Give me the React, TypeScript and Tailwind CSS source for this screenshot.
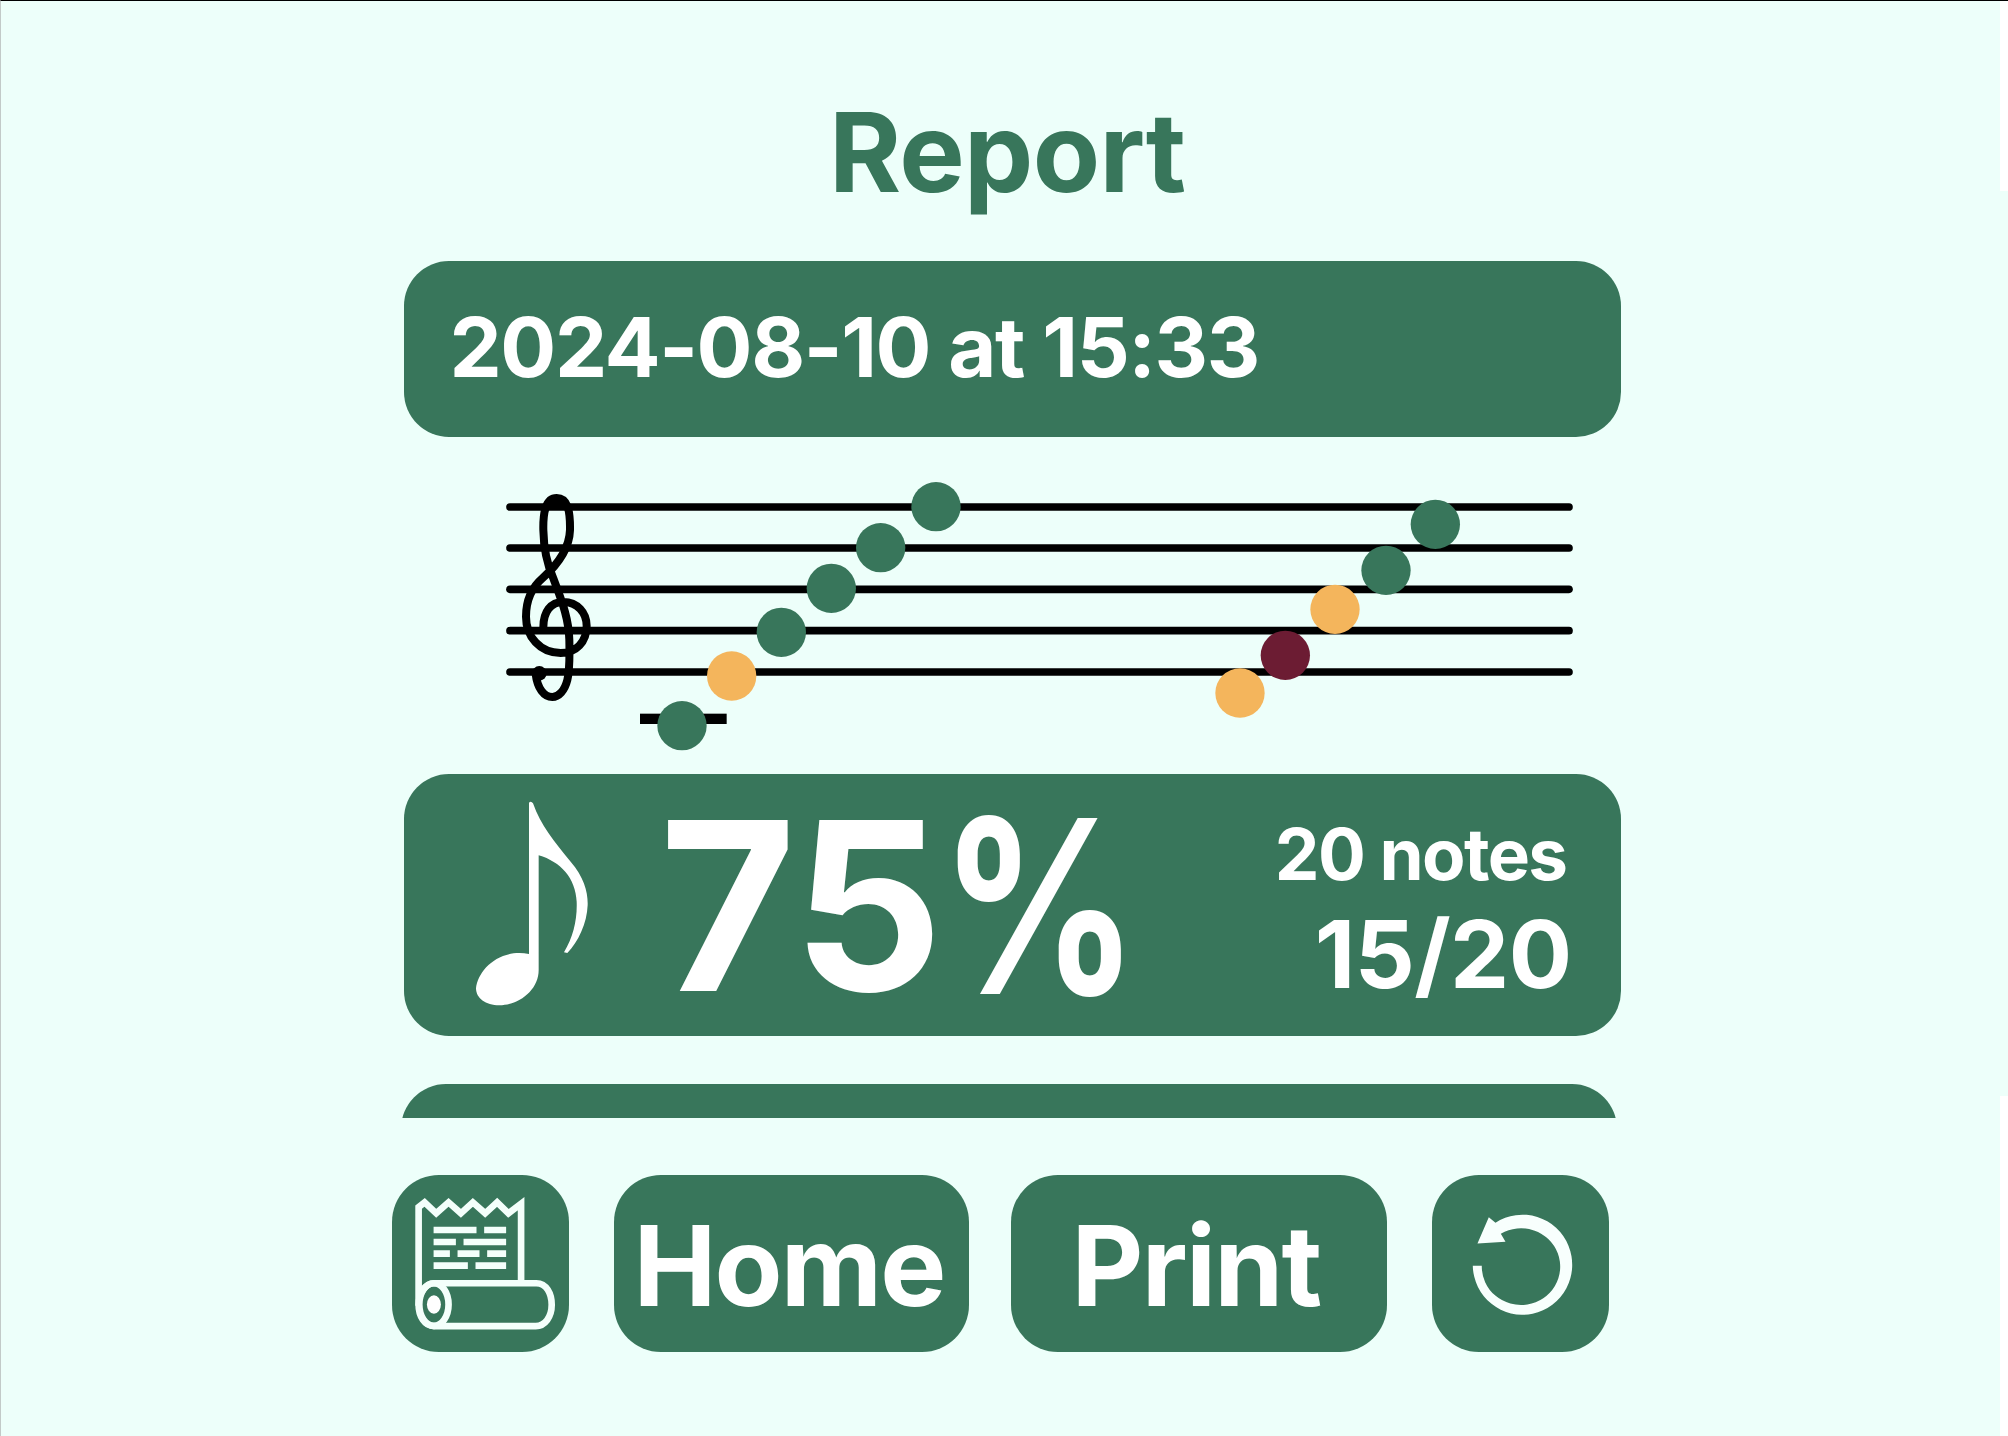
const STAFF_LINES = [111, 234, 358, 482, 606];

const GREEN = '#38765b';
const AMBER = '#f4b55c';
const MAROON = '#6c1c33';

const NOTES = [
  { x: 576, y: 767, color: GREEN },
  { x: 725, y: 618, color: AMBER },
  { x: 874, y: 487, color: GREEN },
  { x: 1024, y: 355, color: GREEN },
  { x: 1172, y: 233, color: GREEN },
  { x: 1338, y: 110, color: GREEN },
  { x: 2250, y: 669, color: AMBER },
  { x: 2386, y: 556, color: MAROON },
  { x: 2535, y: 418, color: AMBER },
  { x: 2688, y: 301, color: GREEN },
  { x: 2836, y: 163, color: GREEN },
];

function Staff() {
  return (
    <svg className="ml-[490px] mt-[33px] block h-[290px] w-[1110px] shrink-0" viewBox="0 0 3330 870">
      {STAFF_LINES.map((y) => (
        <line key={y} x1="60" x2="3237" y1={y} y2={y} stroke="#000" strokeWidth="23" strokeLinecap="round" />
      ))}
      <g fill="none" stroke="#000" strokeWidth="24" strokeLinecap="round" strokeLinejoin="round">
        <path
          strokeLinecap="butt"
          d="M160 472C160 425 182 396 220 396C262 396 290 428 290 468C290 516 258 549 212 549C150 549 108 500 108 440C108 385 130 348 158 324C194 292 238 240 240 180C241 120 232 84 200 84C166 84 159 130 160 180C161 235 172 285 190 325C212 385 236 440 238 510C239 560 240 600 232 630C224 662 206 681 187 681C162 681 142 655 137 612"
        />
        <path d="M180 97C190 89 210 89 220 97" />
      </g>
      <circle cx="148" cy="610" r="22" />
      <rect x="450" y="731" width="260" height="31" />
      {NOTES.map((n) => (
        <circle key={n.x} cx={n.x} cy={n.y} r="74" fill={n.color} />
      ))}
    </svg>
  );
}

function EighthNote() {
  return (
    <svg className="mb-[4px] block h-[206px] w-[116px] shrink-0" viewBox="250 120 348 618" fill="#fff">
      <path d="M415 128Q421 122 427 130C450 195 490 245 540 305C580 352 592 395 591 435C589 490 563 545 530 579L520 577C548 530 560 480 558 425C555 355 510 305 444 286V630C444 690 385 736 326 736C285 736 256 715 256 685C262 630 325 565 415 582Z" />
    </svg>
  );
}

function ReceiptIcon() {
  return (
    <svg className="block size-full" viewBox="36 342 532 533" fill="none" stroke="#f4fffb" strokeWidth="20">
      <path d="M116 735V438L134 424L169 457L206 424L243 457L279 424L316 457L352 424L386 457L424 428V665" />
      <path d="M162 667H470C500 667 516 698 516 732C516 768 496 796 468 796H162C134 796 116 766 116 732C116 698 136 667 162 667Z" />
      <ellipse cx="162" cy="731" rx="44" ry="64" />
      <ellipse cx="162" cy="731" rx="21" ry="28" fill="#fff" stroke="none" />
      <path d="M161 507H290M313 507H379M161 543H228M251 543H379M161 578H210M233 578H299M322 578H379M161 614H264M287 614H379" />
    </svg>
  );
}

function RestartIcon() {
  return (
    <svg className="block size-full" viewBox="66 72 530 532" fill="#f8fffd">
      <path d="M188 344A149 150 0 1 0 256 215L236 199L202 277L286 272L272 248A117.5 115 0 1 1 215 344Z" />
    </svg>
  );
}

export default function App() {
  return (
    <div className="relative h-[1436px] w-[2008px] overflow-hidden border-l border-t border-l-[#c2cac8] border-t-black bg-[#edfffa] font-['Inter',sans-serif] font-bold text-white">
      <div className="absolute right-0 top-0 h-[190px] w-[8px] bg-white" />
      <div className="absolute bottom-0 right-0 h-[340px] w-[8px] bg-white" />
      <div className="-ml-px -mt-px flex h-[1436px] w-[2008px] flex-col">
        <div className="flex h-[1118px] flex-col overflow-hidden">
          <h1 className="mt-[92px] h-[120px] shrink-0 whitespace-nowrap pl-[829px] text-[110px] leading-[120px] tracking-[-0.7px] text-[#38765b]">
            Report
          </h1>
          <div className="ml-[403.5px] mt-[48.5px] flex h-[176.5px] w-[1217px] shrink-0 items-center rounded-[45px] bg-[#38765b] pb-[3px] pl-[46px]">
            <span className="whitespace-nowrap text-[83px] leading-none tracking-[-1.42px]">2024-08-10 at 15:33</span>
          </div>
          <Staff />
          <div className="ml-[403.5px] mt-[14px] flex h-[262px] w-[1217px] shrink-0 items-center rounded-[45px] bg-[#38765b] pl-[70px] pr-[49px]">
            <EighthNote />
            <span className="ml-[70px] flex whitespace-nowrap text-[235px] leading-none">
              <span className="tracking-[-1px]">75</span>
              <span className="-ml-[2px] inline-block origin-left scale-x-[0.832] scale-y-[1.03]">%</span>
            </span>
            <div className="ml-auto flex flex-col items-end whitespace-nowrap pb-[3px]">
              <span className="mr-[5px] text-[71px] leading-[101px] tracking-[-1.6px]">20 notes</span>
              <span className="text-[94px] leading-[99px] tracking-[-0.6px]">15/20</span>
            </div>
          </div>
          <div className="ml-[401px] mt-[48px] h-[177px] w-[1216px] shrink-0 rounded-[45px] bg-[#38765b]" />
        </div>
        <div className="ml-[392px] mt-[56.5px] flex h-[177.5px] items-stretch">
          <button className="w-[177px] rounded-[47px] bg-[#38765b]">
            <ReceiptIcon />
          </button>
          <button className="ml-[45px] flex w-[355px] items-center justify-center rounded-[47px] bg-[#38765b] pr-[5px] pt-[4px] text-[111px] leading-none tracking-[-1.8px]">
            Home
          </button>
          <button className="ml-[42px] flex w-[376px] items-center justify-center rounded-[47px] bg-[#38765b] pr-[6px] pt-[4px] text-[111px] leading-none tracking-[-1.8px]">
            Print
          </button>
          <button className="ml-[45px] w-[177px] rounded-[47px] bg-[#38765b]">
            <RestartIcon />
          </button>
        </div>
      </div>
    </div>
  );
}
